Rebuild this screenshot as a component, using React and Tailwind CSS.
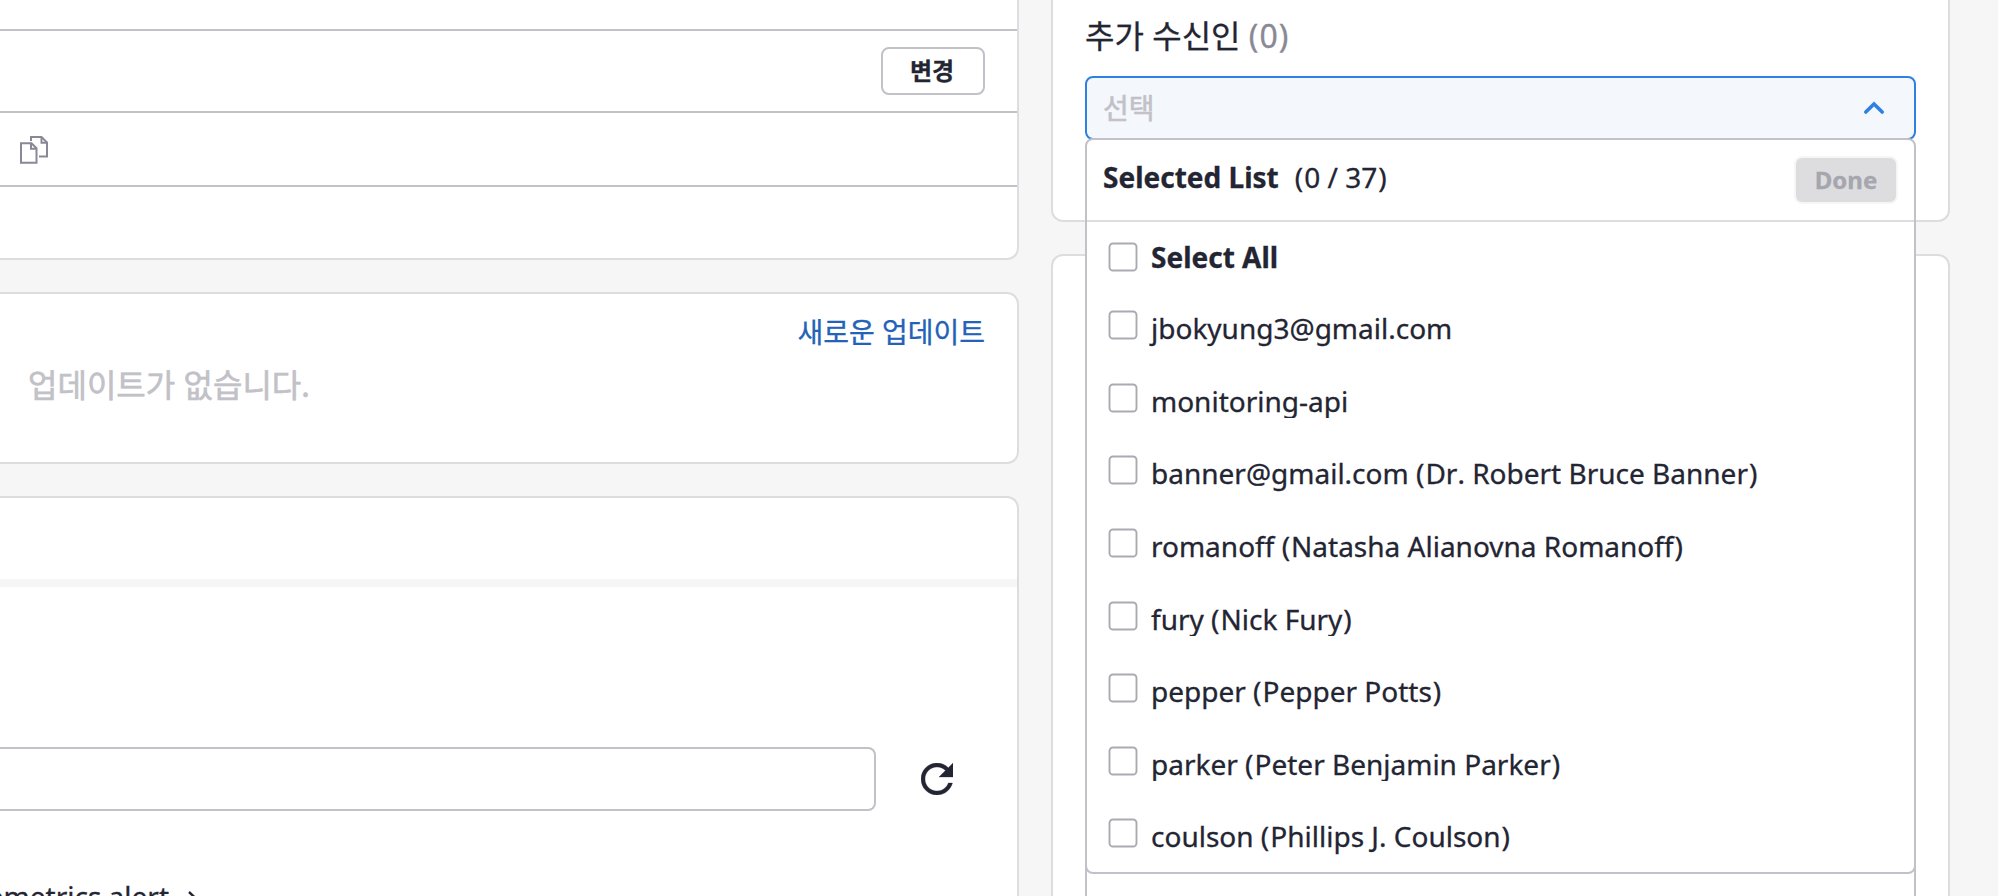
import React from "react";

const people = [
  { name: "jbokyung3@gmail.com" },
  { name: "monitoring-api", clip: true },
  { name: "banner@gmail.com", full: "Dr. Robert Bruce Banner" },
  { name: "romanoff", full: "Natasha Alianovna Romanoff" },
  { name: "fury", full: "Nick Fury", clip: true },
  { name: "pepper", full: "Pepper Potts" },
  { name: "parker", full: "Peter Benjamin Parker", clip: true },
  { name: "coulson", full: "Phillips J. Coulson" },
];

function Parens({ children }) {
  return (
    <>
      <span className="mr-px">(</span>
      {children}
      <span className="ml-px">)</span>
    </>
  );
}

function FullName({ text }) {
  if (!text.startsWith("Dr.")) return text;
  return (
    <>
      <span className="[font-kerning:none]">Dr.</span>
      {text.slice(3)}
    </>
  );
}

function Checkbox() {
  return (
    <svg className="-mt-px -ml-px size-[30px] shrink-0" viewBox="0 0 30 30" fill="none">
      <rect x="1.5" y="1.5" width="27" height="27" rx="3.5" fill="#fff" stroke="#a9abb1" strokeWidth="1.9" />
    </svg>
  );
}

function CopyIcon() {
  return (
    <svg className="size-7" viewBox="0 0 28 28" fill="none" stroke="#898995" strokeWidth="2">
      <path d="M1 7.200h10.500l5 5V26.800H1z" />
      <path d="M11 7.200v5.500h5.500" />
      <path d="M11 5V1h10.500L27 6.500V20.400H19" />
      <path d="M21.500 1v5.700H27" />
    </svg>
  );
}

function RefreshIcon() {
  return (
    <svg className="size-8" viewBox="4 4 16 16" fill="#232533" stroke="#232533" strokeWidth=".15">
      <path d="M17.650 6.350C16.200 4.900 14.210 4 12 4c-4.420 0-7.990 3.580-7.990 8s3.570 8 7.990 8c3.730 0 6.840-2.550 7.730-6h-2.080c-.82 2.330-3.040 4-5.650 4-3.310 0-6-2.690-6-6s2.690-6 6-6c1.660 0 3.140.69 4.220 1.780L13 11h7V4l-2.350 2.350z" />
    </svg>
  );
}

function LeftColumn() {
  return (
    <div className="flex w-[1019px] shrink-0 flex-col gap-8">
      <section className="h-[260px] rounded-br-xl border-r-2 border-b-2 border-[#dddddf] bg-white">
        <div className="h-[31px] border-b-2 border-[#c1c1c7]" />
        <div className="flex h-[82px] items-start justify-end border-b-2 border-[#c1c1c7] pt-4 pr-8">
          <button className="flex h-12 w-[104px] items-center justify-center rounded-lg border-2 border-[#c1c1c7] pr-0.5 text-2xl leading-none font-bold">변경</button>
        </div>
        <div className="h-[74px] border-b-2 border-[#c1c1c7] pt-[23px] pl-5">
          <CopyIcon />
        </div>
      </section>
      <section className="h-[172px] rounded-r-xl border-2 border-l-0 border-[#dddddf] bg-white">
        <div className="flex h-[76px] justify-end pt-[18px] pr-8">
          <a className="text-[28px] leading-10 text-[#2362b7]">새로운 업데이트</a>
        </div>
        <p className="-mt-[9px] pl-7 text-[32px] leading-12 text-[#c1c1c7] [-webkit-text-stroke:0.6px]">업데이트가 없습니다.</p>
      </section>
      <section className="h-[400px] rounded-tr-xl border-t-2 border-r-2 border-[#dddddf] bg-white">
        <div className="h-[89px] border-b-8 border-[#f6f6f6]" />
        <div className="flex items-center gap-[45px] pt-[160px]">
          <div className="h-16 w-[876px] rounded-r-lg border-2 border-l-0 border-[#c1c1c7]" />
          <RefreshIcon />
        </div>
        <div className="flex gap-2 pt-[65px] text-[28px] leading-10 whitespace-nowrap">
          <span className="flex w-[169px] justify-end">ometrics alert</span>
          <svg className="mt-[15px] h-[18px] w-[22px]" viewBox="0 0 22 18" fill="none" stroke="#232533" strokeWidth="2.400">
            <path d="M0 8.500h20M12 1l8 7.500-8 7.500" />
          </svg>
        </div>
      </section>
    </div>
  );
}

function Dropdown() {
  return (
    <div className="absolute top-15 -left-0.5 z-10 h-[736px] w-[831px] overflow-hidden rounded-lg border-2 border-[#c1c1c7] bg-white">
      <div className="flex h-[82px] items-start justify-between border-b-2 border-[#dddddf] pl-4">
        <div className="flex gap-4 pt-[17px] text-[28px] leading-10">
          <b>Selected List</b>
          <span>
            <Parens>0 / 37</Parens>
          </span>
        </div>
        <button className="mt-4 mr-4 flex h-12 w-26 items-center justify-center rounded-lg border-2 border-[#f6f6f7] bg-[#dddddf] text-2xl font-bold text-[#a5a6ae]">Done</button>
      </div>
      <ul className="pl-[22px]">
        <li className="flex h-[89.15px] items-start gap-[13px] pt-[21px]">
          <Checkbox />
          <b className="-mt-[3px] text-[28px] leading-[34px]">Select All</b>
        </li>
        {people.map(({ name, full, clip }) => (
          <li key={name} className="flex h-[72.6px] items-start gap-[13px]">
            <Checkbox />
            <span className={clip ? "overflow-hidden text-[28px] leading-[34px] whitespace-nowrap" : "text-[28px] leading-[34px] whitespace-nowrap"}>
              {name}
              {full && (
                <>
                  {" "}
                  <Parens>
                    <FullName text={full} />
                  </Parens>
                </>
              )}
            </span>
          </li>
        ))}
      </ul>
    </div>
  );
}

function RightColumn() {
  return (
    <div className="flex w-[899px] shrink-0 flex-col gap-8">
      <section className="h-[222px] rounded-b-xl border-2 border-t-0 border-[#dddddf] bg-white px-8">
        <h2 className="h-[76px] pt-3 text-[32px] leading-[48px]">
          추가 수신인{" "}
          <span className="text-[#898995]">
            <Parens>0</Parens>
          </span>
        </h2>
        <div className="relative flex h-16 w-[831px] items-center justify-between rounded-lg border-2 border-[#2f80e3] bg-[#f4f7fc] pr-[29px] pl-4">
          <span className="text-[28px] leading-10 text-[#c1c1c7] [-webkit-text-stroke:0.6px]">선택</span>
          <svg className="h-[14px] w-[22px]" viewBox="0 0 22 14" fill="none" stroke="#2f80e3" strokeWidth="3.600" strokeLinecap="round">
            <path d="M2.800 11L11 3l8.200 8" />
          </svg>
          <Dropdown />
        </div>
      </section>
      <section className="h-[642px] rounded-t-xl border-2 border-b-0 border-[#dddddf] bg-white px-8 pt-8">
        <div className="h-[608px] w-[831px] border-x-2 border-[#c1c1c7]" />
      </section>
    </div>
  );
}

export default function App() {
  return (
    <main className="flex h-[896px] w-[1998px] gap-8 overflow-hidden bg-[#f6f6f6] font-['Noto_Sans','Noto_Sans_CJK_KR',sans-serif] text-[#232533] [-webkit-text-stroke:0.3px]">
      <LeftColumn />
      <RightColumn />
    </main>
  );
}
